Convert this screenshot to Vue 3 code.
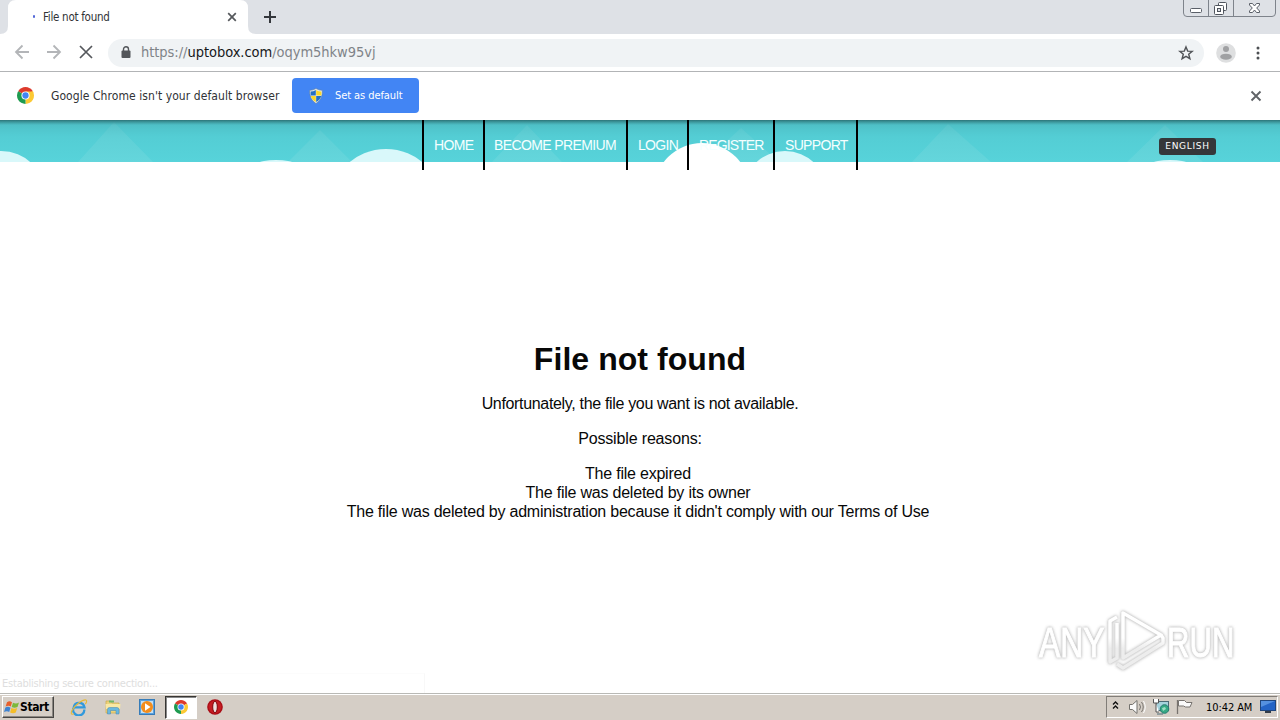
<script setup>
const nav = [
  { label: 'HOME', width: 61 },
  { label: 'BECOME PREMIUM', width: 143 },
  { label: 'LOGIN', width: 61 },
  { label: 'REGISTER', width: 86 },
  { label: 'SUPPORT', width: 83 },
]
</script>

<template>
  <div class="screen">
    <div class="tabstrip">
      <svg class="tab-shape" width="258" height="34" viewBox="0 0 258 34">
        <path d="M0 34Q8 34 8 26V8Q8 0 16 0H240Q248 0 248 8V26Q248 34 256 34Z" fill="#fff" />
      </svg>
      <div class="tab">
        <i class="spinner"></i>
        <span class="tab-title"><span>File not found</span></span>
        <svg class="tab-close" width="10" height="10" viewBox="0 0 10 10"><path d="M1.2 1.2l7.6 7.6M8.8 1.2L1.2 8.8" stroke="#55585c" stroke-width="1.7" /></svg>
      </div>
      <svg class="new-tab" width="14" height="14" viewBox="0 0 14 14"><path d="M7 1v12M1 7h12" stroke="#34373c" stroke-width="2" /></svg>
      <svg class="win-controls" width="94" height="18" viewBox="0 0 94 18">
        <path d="M.5 0V13q0 3.500 3.500 3.500H89q3.500 0 3.500-3.500V0M25.500 0V16.500M50.500 0V16.500" fill="none" stroke="#7e838b" />
        <rect x="7.500" y="8.500" width="11" height="4" rx="1" fill="#fff" stroke="#5a5f68" />
        <rect x="35.500" y="2.500" width="8" height="8" rx="1" fill="#fff" stroke="#4f545d" />
        <rect x="31.500" y="5.500" width="9" height="9" rx="1" fill="#fff" stroke="#4f545d" />
        <rect x="34.500" y="8.500" width="3" height="3" fill="#dee1e6" stroke="#4f545d" />
        <path d="M66.500 3.500h3l2 2.500 2-2.500h3v1.500L73.700 8l2.800 3v1.500h-3l-2-2.500-2 2.500h-3V11l2.800-3-2.800-3z" fill="#fff" stroke="#5a5f68" />
      </svg>
    </div>

    <div class="toolbar">
      <svg class="nav-icons" width="108" height="37" viewBox="0 0 108 37" fill="none">
        <path d="M29 18H16.500M22.500 11.500L16 18l6.500 6.500M47 18h12.500M53.500 11.500L60 18l-6.500 6.500" stroke="#b3b5b8" stroke-width="1.800" />
        <path d="M80 12l12 12M92 12L80 24" stroke="#55585c" stroke-width="1.700" />
      </svg>
      <div class="omnibox">
        <svg class="lock" width="10" height="13" viewBox="0 0 10 13"><rect x=".5" y="4.500" width="9" height="7.500" rx="1" fill="#53565a" /><path d="M2.500 5V3.300a2.500 2.500 0 015 0V5" fill="none" stroke="#53565a" stroke-width="1.400" /></svg>
        <span class="url">https://<b>uptobox.com</b>/oqym5hkw95vj</span>
        <svg class="star" width="16" height="16" viewBox="0 0 16 16"><path d="M8 1.900l1.700 4.200 4.500.3-3.500 2.900 1.200 4.400L8 11.300l-3.900 2.400 1.200-4.400-3.500-2.900 4.500-.3z" fill="none" stroke="#505357" stroke-width="1.400" /></svg>
      </div>
      <svg class="avatar" width="20" height="20" viewBox="0 0 20 20"><circle cx="10" cy="10" r="9.800" fill="#dedfe0" /><circle cx="10" cy="6" r="3" fill="#a0a1a3" /><ellipse cx="10" cy="13.700" rx="5.800" ry="3" fill="#a0a1a3" /></svg>
      <svg class="dots" width="4" height="14" viewBox="0 0 4 14" fill="#4c4f53"><circle cx="2" cy="2" r="1.500" /><circle cx="2" cy="7" r="1.500" /><circle cx="2" cy="12" r="1.500" /></svg>
    </div>

    <div class="infobar">
      <svg class="chrome-logo" width="17" height="17" viewBox="0 0 20 20">
        <path d="M10 10L1.340 5A10 10 0 0118.660 5Z" fill="#dd3a2c" />
        <path d="M10 10L18.660 5A10 10 0 0110 20Z" fill="#fcc934" />
        <path d="M10 10L10 20A10 10 0 011.340 5Z" fill="#1e9b50" />
        <path d="M10 5.200h8.800a10 10 0 01.5 1.300L14 10z" fill="#fcc934" />
        <circle cx="10" cy="10" r="4.800" fill="#fff" /><circle cx="10" cy="10" r="3.700" fill="#4285f4" />
      </svg>
      <span class="info-text">Google Chrome isn't your default browser</span>
      <div class="set-default">
        <svg width="14" height="16" viewBox="0 0 14 16">
          <path d="M7 .5Q10 2.500 13.300 2.300Q14 11 7 15.500Q0 11 .7 2.300Q4 2.500 7 .5Z" fill="#e8edf2" stroke="#60809a" stroke-width=".6" />
          <path d="M6.800 2V7.500H1.700Q1.500 5.500 1.700 3.500Q4.500 3.500 6.800 2Z" fill="#246fc5" />
          <path d="M7.200 2V7.500h5.100Q12.500 5.500 12.300 3.500Q9.500 3.500 7.200 2Z" fill="#fad72a" />
          <path d="M1.800 8h5v6Q2.500 11.500 1.800 8Z" fill="#fad72a" />
          <path d="M12.200 8h-5v6Q11.500 11.500 12.200 8Z" fill="#246fc5" />
        </svg>
        <span>Set as default</span>
      </div>
      <svg class="info-close" width="12" height="12" viewBox="0 0 12 12"><path d="M1.500 1.500l9 9M10.500 1.500l-9 9" stroke="#606367" stroke-width="1.900" /></svg>
    </div>

    <main class="page">
      <header class="site-header">
        <svg class="sky" width="1280" height="42" viewBox="0 0 1280 42">
          <defs>
            <linearGradient id="shade" x1="0" x2="0" y1="0" y2="1">
              <stop offset="0" stop-color="#246367" stop-opacity=".85" />
              <stop offset=".05" stop-color="#2d7478" stop-opacity=".62" />
              <stop offset=".12" stop-color="#34878d" stop-opacity=".25" />
              <stop offset=".4" stop-color="#3ca4aa" stop-opacity=".12" />
              <stop offset="1" stop-color="#3ca4aa" stop-opacity="0" />
            </linearGradient>
          </defs>
          <rect width="1280" height="42" fill="#57d3da" />
          <g fill="#fff" fill-opacity=".08">
            <path d="M78 42L114 2l39 40zM288 42l32-32 32 32zM492 42l35-37 35 37zM704 42l37-34 38 34zM912 42l36-38 43 38zM1127 42l38-37 38 37z" />
          </g>
          <rect width="1280" height="42" fill="url(#shade)" />
          <g fill="#d9f8fa"><circle cx="1" cy="75" r="44" /><circle cx="386" cy="86" r="57" /><circle cx="785" cy="73" r="42" /><ellipse cx="276" cy="43" rx="17" ry="3" /><ellipse cx="1170" cy="43" rx="17" ry="3" /></g>
          <circle cx="702" cy="71" r="48" fill="#fff" />
        </svg>
        <nav class="site-nav">
          <a v-for="item in nav" :key="item.label" :style="{ width: item.width + 'px' }"><span>{{ item.label }}</span></a>
        </nav>
        <span class="language">ENGLISH</span>
      </header>

      <section class="message">
        <h1><span>File not found</span></h1>
        <p class="l1"><span>Unfortunately, the file you want is not available.</span></p>
        <p class="l2"><span>Possible reasons:</span></p>
        <ul>
          <li><span>The file expired</span></li>
          <li><span>The file was deleted by its owner</span></li>
          <li><span>The file was deleted by administration because it didn't comply with our Terms of Use</span></li>
        </ul>
      </section>

      <div class="status"><span>Establishing secure connection...</span></div>

      <svg class="watermark" width="245" height="80" viewBox="0 0 245 80">
        <defs>
          <linearGradient id="fade" gradientUnits="userSpaceOnUse" x1="0" x2="0" y1="8" y2="70">
            <stop offset=".45" stop-color="#fff" />
            <stop offset=".62" stop-color="#ededed" />
            <stop offset="1" stop-color="#ededed" />
          </linearGradient>
        </defs>
        <g class="mark">
          <text transform="translate(9 55) scale(.76 1)">ANY</text>
          <text transform="translate(137 55) scale(.74 1)">RUN</text>
          <g class="play">
            <path d="M93 11V56L131 33Z" />
            <path d="M87 15L80 19V60L87 56V21" />
            <path d="M87 62L93 66L133 41V36L131 33" />
          </g>
        </g>
      </svg>
    </main>

    <footer class="taskbar">
      <div class="start">
        <svg width="16" height="15" viewBox="0 0 16 15">
          <path d="M3 2.300Q5.500.5 8 2.200L6.800 6.500Q4.500 5 1.600 6.500Z" fill="#e8602c" />
          <path d="M9 2.700Q12 4.200 15 2.500L13.500 7Q10.500 8.400 7.700 7Z" fill="#7cb83a" />
          <path d="M1.400 7.500Q4 6 6.500 7.700L5.200 12Q3 10.500 0 12Z" fill="#3f83d1" />
          <path d="M7.400 8.100Q10.300 9.500 13.200 8.100L11.800 12.600Q9 14 6.100 12.500Z" fill="#f4bd28" />
        </svg>
        <span>Start</span>
      </div>
      <div class="launch ie">
        <svg width="18" height="18" viewBox="0 0 18 18" fill="none">
          <path d="M14.300 11.500A5.600 5.600 0 113.700 9.400H14.500A5.500 5.500 0 003.700 9.400" stroke="#3199dc" stroke-width="2.300" />
          <path d="M4 15.800C1 17 .5 15.500 2 12.500C5 7 13 1 16 2c1.300.6.300 3-.7 4.200" stroke="#e5b938" stroke-width="1.200" />
        </svg>
      </div>
      <div class="launch folder">
        <svg width="16" height="16" viewBox="0 0 16 16">
          <path d="M1 2h5l1 2h7v10H1z" fill="#ecd27b" stroke="#cba94b" stroke-width=".7" /><path d="M4 1.500h5v2H4z" fill="#72b768" /><path d="M.5 5h15L15 10H1z" fill="#f9e8a5" /><path d="M2.500 15V10.500Q2.500 8.500 4.500 8.500h7.500Q14 8.500 14 10.500V15h-3v-3.500H5.500V15z" fill="#69b8df" stroke="#4587b0" stroke-width=".5" />
        </svg>
      </div>
      <div class="launch media">
        <svg width="16" height="16" viewBox="0 0 16 16"><rect x=".5" y=".5" width="15" height="15" fill="#5aa2df" stroke="#377cb8" /><rect x="2" y="2" width="12" height="12" fill="#c6e0f1" /><circle cx="8" cy="8" r="6" fill="#f38d1c" /><path d="M6 4.300L11.500 8 6 11.700z" fill="#fff" /></svg>
      </div>
      <div class="launch active">
        <svg width="14" height="14" viewBox="0 0 20 20">
          <path d="M10 10L1.340 5A10 10 0 0118.660 5Z" fill="#dd3a2c" /><path d="M10 10L18.660 5A10 10 0 0110 20Z" fill="#fcc934" /><path d="M10 10L10 20A10 10 0 011.340 5Z" fill="#1e9b50" /><circle cx="10" cy="10" r="5" fill="#fff" /><circle cx="10" cy="10" r="3.900" fill="#4285f4" />
        </svg>
      </div>
      <div class="launch opera">
        <svg width="16" height="16" viewBox="0 0 16 16"><circle cx="8" cy="8" r="7.800" fill="#a90d16" /><circle cx="8" cy="8" r="6.500" fill="#c51c22" /><ellipse cx="8" cy="8" rx="2.300" ry="5.700" fill="#efe0de" stroke="#7c050b" /></svg>
      </div>
      <div class="tray">
        <svg class="tray-icons" width="88" height="20" viewBox="0 0 88 20">
          <path d="M6 7.500L8.500 5 11 7.500M6 11.500L8.500 9l2.500 2.500" fill="none" stroke="#111" stroke-width="1.400" />
          <path d="M22.500 7.500h3l4.500-4v13l-4.500-4h-3z" fill="#fafafa" stroke="#73716d" />
          <path d="M32.500 7q2 3 0 6M34.500 5q3.500 5 0 10" fill="none" stroke="#77746f" />
          <path d="M36.500 4q3.500 6 0 12" fill="none" stroke="#fff" />
          <rect x="49.500" y="4.500" width="12" height="9" fill="#a6d2dc" stroke="#4c6a76" /><path d="M50 17h6" stroke="#4c6a76" /><circle cx="57.500" cy="12" r="4.300" fill="#36a984" stroke="#267a72" /><path d="M55 11l3-1 1 2-3 2z" fill="#9fddc5" /><path d="M46.500 2v4h5V2M49 6v9h3" stroke="#555" fill="#fff" />
          <path d="M70.500 3v14" stroke="#77736f" stroke-width="1.300" /><path d="M71.500 3.500h6l2 2h5.500l-2 4.500h-4.500l-2-1h-5z" fill="#fafafa" stroke="#77736f" />
        </svg>
        <span class="clock">10:42 AM</span>
        <svg class="monitor" width="16" height="14" viewBox="0 0 16 14"><rect x=".5" y=".5" width="15" height="10" fill="#2464c5" stroke="#20467c" /><path d="M1 1h14L1 7z" fill="#5591df" /><path d="M5 11h6v2H5z" fill="#333d49" /></svg>
      </div>
    </footer>
  </div>
</template>

<style>
body { margin: 0; overflow: hidden; }
</style>

<style scoped>
* { box-sizing: border-box; }
svg { display: block; flex: none; }
.screen { width: 1280px; height: 720px; display: flex; flex-direction: column; background: #fff; font-family: "DejaVu Sans Condensed", "DejaVu Sans", sans-serif; color: #303236; overflow: hidden; white-space: nowrap; }
.tabstrip { height: 34px; flex: none; background: #dee1e6; position: relative; display: flex; align-items: flex-start; }
.tab-shape { position: absolute; left: 0; top: 0; }
.tab { position: relative; width: 248px; height: 34px; display: flex; align-items: center; padding-left: 33px; }
.spinner { width: 2px; height: 3px; background: #5367d7; border-radius: 1px; margin-top: -2px; }
.tab-title { margin-left: 8px; width: 184px; font-size: 11.500px; letter-spacing: -.28px; }
.new-tab { margin: 10px 0 0 15px; }
.win-controls { margin: 0 3px 0 auto; }
.toolbar { height: 38px; flex: none; display: flex; align-items: center; border-bottom: 1px solid #b2b4b6; }
.omnibox { width: 1096px; height: 28px; border-radius: 14px; background: #f0f3f5; display: flex; align-items: center; padding: 0 10px 0 13px; }
.url { margin-left: 10px; padding-bottom: 2px; font-size: 14.500px; letter-spacing: -.04px; color: #7f8388; }
.url b { font-weight: 400; color: #16181a; }
.star { margin-left: auto; }
.avatar { margin-left: 12px; }
.dots { margin-left: 20px; }
.infobar { height: 48px; flex: none; display: flex; align-items: center; padding-left: 17px; padding-bottom: 1px; }
.info-text { margin-left: 17px; width: 241px; font-size: 12px; letter-spacing: .07px; }
.set-default { height: 35px; width: 127px; border-radius: 4px; background: #4285f4; color: #fff; display: flex; align-items: center; padding-left: 17px; font-size: 11px; }
.set-default span { margin-left: 12px; letter-spacing: -.08px; }
.info-close { margin-left: auto; margin-right: 18px; }
.page { height: 573px; flex: none; position: relative; font-family: "Liberation Sans", Arial, sans-serif; color: #080808; }
.site-header { height: 42px; position: relative; display: flex; }
.sky { position: absolute; left: 0; top: 0; }
.site-nav { position: relative; display: flex; margin-left: 422px; height: 50px; width: 436px; border-right: 2px solid #000; color: #f4ffff; font-size: 14px; letter-spacing: -.67px; }
.site-nav a { border-left: 2px solid #000; padding: 17px 0 0 10px; line-height: 16px; }
.site-nav a:nth-child(2) { padding-left: 9px; letter-spacing: -.62px; }
.site-nav a:nth-child(4) { letter-spacing: -.9px; }
.language { position: relative; margin: 18px 0 0 301px; width: 57px; height: 17px; border-radius: 3px; background: #35373a; color: #fff; font: 9px/17px "DejaVu Sans", sans-serif; text-align: center; letter-spacing: .7px; }
.message { display: flex; flex-direction: column; align-items: center; padding-top: 178px; font-size: 16px; line-height: 19px; }
h1 { margin: 0; font-size: 32px; line-height: 38px; letter-spacing: .06px; }
p { margin: 16px 0 0; }
ul { list-style: none; margin: 16px 0 0; padding: 0 4px 0 0; text-align: center; }
.l1 { letter-spacing: -.33px; }
.l2 { letter-spacing: -.15px; }
li { letter-spacing: -.22px; }
.status { position: absolute; left: 0; bottom: 0; width: 425px; height: 20px; border-top: 1px solid #fcfcfc; border-right: 1px solid #f8f8f8; padding-left: 2px; line-height: 19px; color: #dedede; font-family: "DejaVu Sans Condensed", "DejaVu Sans", sans-serif; font-size: 11px; letter-spacing: -.22px; }
.watermark { position: absolute; left: 1030px; top: 482px; }
.mark { fill: url(#fade); font: 42px "Liberation Sans", sans-serif; filter: drop-shadow(0 0 1.500px #bbb) drop-shadow(0 0 1px #ddd); }
.mark text { stroke: url(#fade); stroke-width: 1px; }
.play { fill: none; stroke: url(#fade); stroke-width: 3.500px; stroke-linejoin: round; }
.taskbar { height: 27px; flex: none; background: #d5cec6; border-top: 1px solid #b9b9b5; box-shadow: inset 0 1px #fff; display: flex; align-items: center; }
.start { width: 52px; height: 22px; margin-left: 2px; display: flex; align-items: center; padding-left: 1px; border: 1px solid; border-color: #fff #484643 #484643 #fff; box-shadow: inset -1px -1px #8b8782; color: #000; font-weight: bold; font-size: 12px; letter-spacing: -.4px; }
.launch { width: 32px; height: 23px; margin-left: 2px; display: flex; align-items: center; justify-content: center; }
.ie { margin-left: 9px; }
.active { background: #fff; border: 1px solid; border-color: #373633 #fff #fff #373633; box-shadow: inset 1px 1px #888; }
.tray { margin-left: auto; margin-right: 2px; width: 172px; height: 22px; display: flex; align-items: center; border: 1px solid; border-color: #817d78 #fff #fff #817d78; }
.clock { width: 49px; margin-left: 11px; font-size: 11px; letter-spacing: -.08px; color: #000; }
.monitor { margin-left: 5px; }
</style>
